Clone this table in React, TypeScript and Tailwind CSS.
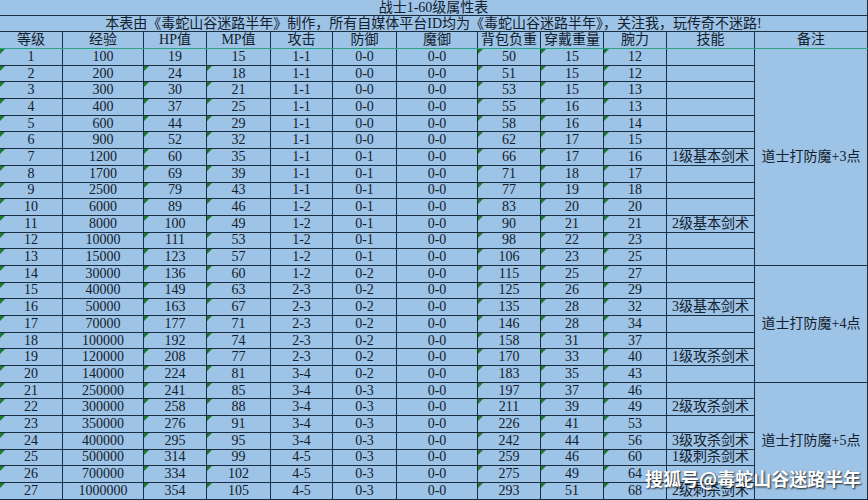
import React from "react";

const headers = ["等级", "经验", "HP值", "MP值", "攻击", "防御", "魔御", "背包负重", "穿戴重量", "腕力", "技能", "备注"];

const rows: string[][] = [
  ["1", "100", "19", "15", "1-1", "0-0", "0-0", "50", "15", "12", ""],
  ["2", "200", "24", "18", "1-1", "0-0", "0-0", "51", "15", "12", ""],
  ["3", "300", "30", "21", "1-1", "0-0", "0-0", "53", "15", "13", ""],
  ["4", "400", "37", "25", "1-1", "0-0", "0-0", "55", "16", "13", ""],
  ["5", "600", "44", "29", "1-1", "0-0", "0-0", "58", "16", "14", ""],
  ["6", "900", "52", "32", "1-1", "0-0", "0-0", "62", "17", "15", ""],
  ["7", "1200", "60", "35", "1-1", "0-1", "0-0", "66", "17", "16", "1级基本剑术"],
  ["8", "1700", "69", "39", "1-1", "0-1", "0-0", "71", "18", "17", ""],
  ["9", "2500", "79", "43", "1-1", "0-1", "0-0", "77", "19", "18", ""],
  ["10", "6000", "89", "46", "1-2", "0-1", "0-0", "83", "20", "20", ""],
  ["11", "8000", "100", "49", "1-2", "0-1", "0-0", "90", "21", "21", "2级基本剑术"],
  ["12", "10000", "111", "53", "1-2", "0-1", "0-0", "98", "22", "23", ""],
  ["13", "15000", "123", "57", "1-2", "0-1", "0-0", "106", "23", "25", ""],
  ["14", "30000", "136", "60", "1-2", "0-2", "0-0", "115", "25", "27", ""],
  ["15", "40000", "149", "63", "2-3", "0-2", "0-0", "125", "26", "29", ""],
  ["16", "50000", "163", "67", "2-3", "0-2", "0-0", "135", "28", "32", "3级基本剑术"],
  ["17", "70000", "177", "71", "2-3", "0-2", "0-0", "146", "28", "34", ""],
  ["18", "100000", "192", "74", "2-3", "0-2", "0-0", "158", "31", "37", ""],
  ["19", "120000", "208", "77", "2-3", "0-2", "0-0", "170", "33", "40", "1级攻杀剑术"],
  ["20", "140000", "224", "81", "3-4", "0-2", "0-0", "183", "35", "43", ""],
  ["21", "250000", "241", "85", "3-4", "0-3", "0-0", "197", "37", "46", ""],
  ["22", "300000", "258", "88", "3-4", "0-3", "0-0", "211", "39", "49", "2级攻杀剑术"],
  ["23", "350000", "276", "91", "3-4", "0-3", "0-0", "226", "41", "53", ""],
  ["24", "400000", "295", "95", "3-4", "0-3", "0-0", "242", "44", "56", "3级攻杀剑术"],
  ["25", "500000", "314", "99", "4-5", "0-3", "0-0", "259", "46", "60", "1级刺杀剑术"],
  ["26", "700000", "334", "102", "4-5", "0-3", "0-0", "275", "49", "64", ""],
  ["27", "1000000", "354", "105", "4-5", "0-3", "0-0", "293", "51", "68", "2级刺杀剑术"],
];

const triCols = new Set([0, 2, 3, 7, 8, 9]);

const cellBase =
  "relative flex items-center justify-center bg-[#9dc3e6] leading-none whitespace-nowrap overflow-hidden";

function Tri() {
  return (
    <span className="absolute left-0 top-0 h-0 w-0 border-t-[5px] border-r-[5px] border-t-[#1f7a2e] border-r-transparent" />
  );
}

export default function App() {
  return (
    <div
      className="relative h-[500px] w-[868px] overflow-hidden bg-[#9dc3e6] text-[14px] text-[#13202c]"
      style={{ fontFamily: '"Liberation Serif", "Noto Sans CJK SC", serif' }}
    >
      <div className="grid grid-cols-[62px_80px_62px_63px_61px_63px_80px_62px_62px_62px_87px_112px] grid-rows-[15px_15px_16px_repeat(28,15.7px)] gap-px bg-[#1b2f42] pr-px">
        <div className={`${cellBase} col-span-12`}>战士1-60级属性表</div>
        <div className={`${cellBase} col-span-12`}>
          本表由《毒蛇山谷迷路半年》制作，所有自媒体平台ID均为《毒蛇山谷迷路半年》，关注我，玩传奇不迷路!
        </div>
        {headers.map((h) => (
          <div key={h} className={cellBase}>
            {h}
          </div>
        ))}
        {rows.map((r, ri) => (
          <React.Fragment key={ri}>
            {r.map((v, ci) => (
              <div key={ci} className={cellBase}>
                {triCols.has(ci) && !(ri === 0 && (ci === 2 || ci === 3)) && <Tri />}
                {v}
              </div>
            ))}
            {ri === 0 && <div className={`${cellBase} row-span-13`}>道士打防魔+3点</div>}
            {ri === 13 && <div className={`${cellBase} row-span-7`}>道士打防魔+4点</div>}
            {ri === 20 && <div className={`${cellBase} row-span-7`}>道士打防魔+5点</div>}
          </React.Fragment>
        ))}
        {Array.from({ length: 12 }).map((_, i) => (
          <div key={`e${i}`} className={cellBase} />
        ))}
      </div>
      <div className="absolute left-0 top-[48px] h-px w-full bg-[#2aa585]" />
      <div
        className="absolute left-[645px] top-[469px] whitespace-nowrap text-[18px] font-bold leading-none text-white [text-shadow:1px_1px_2px_rgba(0,0,0,0.85)]"
        style={{ fontFamily: '"Noto Sans CJK SC", sans-serif' }}
      >
        搜狐号@毒蛇山谷迷路半年
      </div>
    </div>
  );
}
